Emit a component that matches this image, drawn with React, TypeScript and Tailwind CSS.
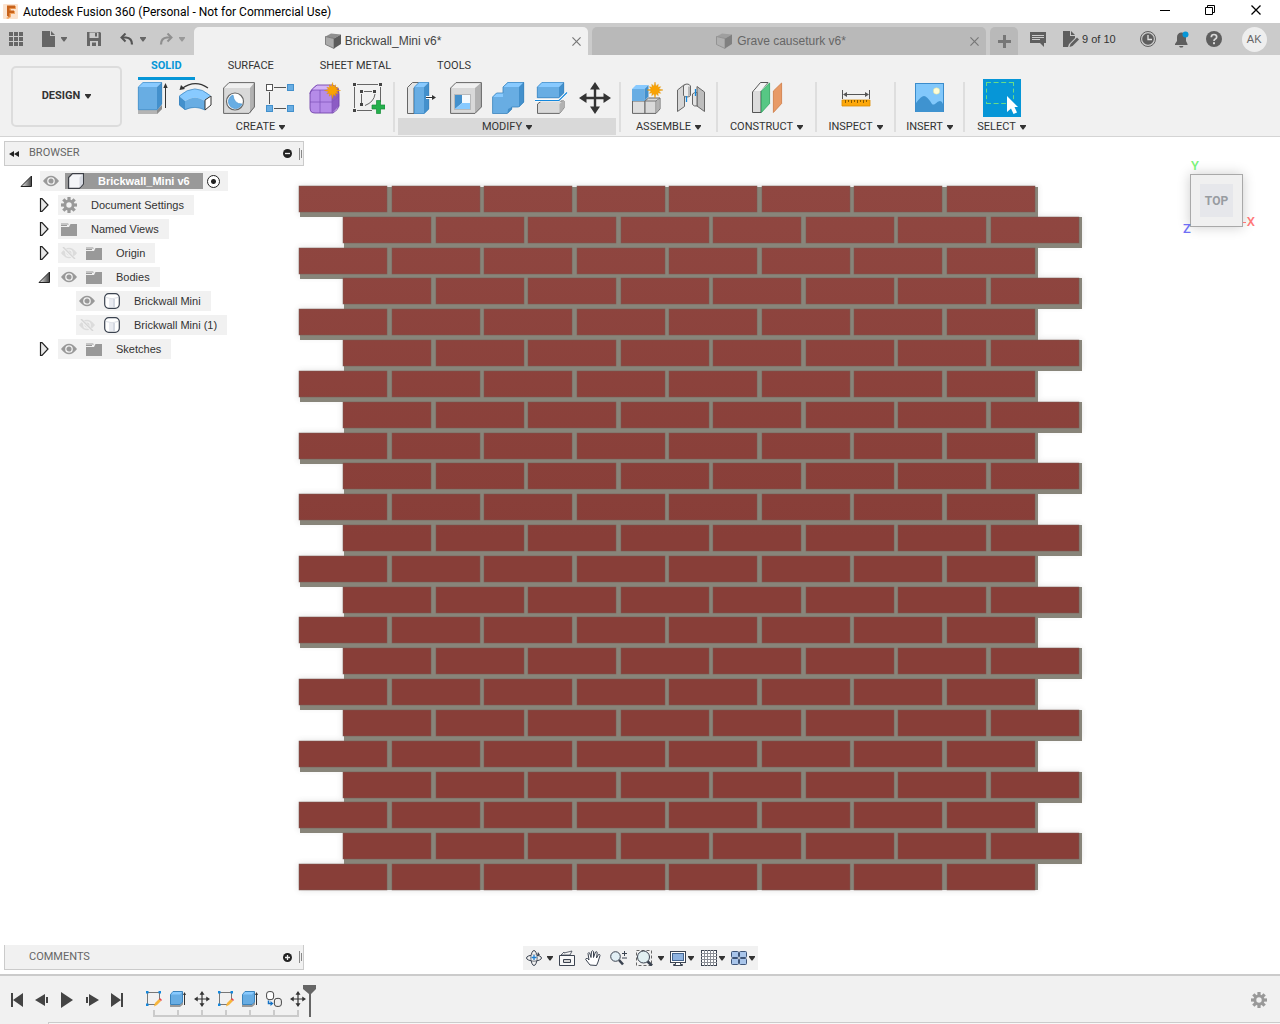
import React from "react";

type IconProps = { w: number; h: number; children: React.ReactNode; className?: string };

function Icon({ w, h, children, className = "" }: IconProps) {
  return (
    <svg width={w} height={h} viewBox={`0 0 ${w} ${h}`} className={`block shrink-0 ${className}`} aria-hidden="true">
      {children}
    </svg>
  );
}

const BLUE = "#68ade3";
const BLUE_TOP = "#88caff";
const BLUE_SIDE = "#4390cc";
const INK = "#333333";

function Caret({ className = "text-[#333]" }: { className?: string }) {
  return (
    <Icon w={6} h={5} className={className}>
      <path d="M0 0h6v1L3.500 4.500h-1L0 1z" fill="currentColor" />
    </Icon>
  );
}

function Star({ x, y }: { x: number; y: number }) {
  const points = Array.from({ length: 24 }, (_, i) => {
    const r = i % 2 ? 4 : i % 6 === 0 ? 8 : 6.6;
    const a = (i * Math.PI) / 12;
    return `${x + r * Math.sin(a)},${y - r * Math.cos(a)}`;
  }).join(" ");
  return <polygon points={points} fill="#f9a203" stroke="#e08f00" strokeWidth="0.4" />;
}

/* ---------- ribbon icons ---------- */

const ExtrudeIcon = () => (
  <Icon w={32} h={32}>
    <path d="M1 28v4h19l5-5v-4l-5 5z" fill="#b4b4b4" />
    <path d="M20 28l5-5v4l-5 5z" fill="#8d8d8d" />
    <path d="M1 5l5-5h19l-5 5z" fill={BLUE_TOP} />
    <path d="M1 5h19v23H1z" fill={BLUE} />
    <path d="M20 5l5-5v22l-5 6z" fill={BLUE_SIDE} />
    <path d="M1.3 27.5V5L6 .5h18.7v21.7L20 27.7H1.3" fill="none" stroke="#3b84bd" strokeWidth="0.6" />
    <path d="M28.5 5v21" stroke={INK} />
    <path d="M26.3 6l2.2-5 2.2 5z" fill={INK} />
  </Icon>
);

const RevolveIcon = () => (
  <Icon w={34} h={32}>
    <path d="M3 6.5Q16 -3 29 6" fill="none" stroke={INK} strokeWidth="1.2" />
    <path d="M0.5 8L2 3l4 4z" fill={INK} />
    <path d="M0 14Q16 0 32 14l-6 5Q16 12 6 19z" fill={BLUE_TOP} />
    <path d="M6 19Q16 12 26 19v9Q16 23 6 28z" fill={BLUE} />
    <path d="M0 14l6 5v9l-6-5z" fill={BLUE_SIDE} />
    <path d="M26 18l6-4v9l-6 5z" fill="#fff" stroke={INK} />
    <path d="M0.4 14Q16 0 31 13.500M0.400 14v9L6 27.600Q16 23 26 28" fill="none" stroke="#3b84bd" strokeWidth="0.7" />
  </Icon>
);

const HoleIcon = () => (
  <Icon w={32} h={32}>
    <path d="M0.500 6l5.500-5.500h25.500L27 6z" fill="#f0f0f0" />
    <path d="M27 6l4.500-5.500V25L27 31.500z" fill="#b2b2b2" />
    <path d="M0.500 6H27v25.500H0.500z" fill="#d9d9d9" />
    <path d="M0.600 6L6 0.600h25.400V25L26 31.400H0.600z" fill="none" stroke="#666" />
    <circle cx="12" cy="19.500" r="8.500" fill="#fff" stroke="#666" strokeWidth="1.200" />
    <path d="M10 13a7 7 0 1 0 9 9Q11 22 10 13z" fill={BLUE} stroke={BLUE_SIDE} strokeWidth="0.600" />
  </Icon>
);

const PatternIcon = () => (
  <Icon w={32} h={32}>
    <path d="M8 5.500h12M3.500 10v12M8 26.500h12" stroke="#555" />
    <rect x="0.500" y="2.500" width="6" height="6" fill="#fff" stroke="#555" />
    <rect x="21.500" y="2.500" width="6" height="6" fill={BLUE} stroke={BLUE_SIDE} />
    <rect x="0.500" y="23.500" width="6" height="6" fill={BLUE} stroke={BLUE_SIDE} />
    <rect x="21.500" y="23.500" width="6" height="6" fill={BLUE} stroke={BLUE_SIDE} />
  </Icon>
);

const FormIcon = () => (
  <Icon w={32} h={32}>
    <path d="M1 9l6-6h18l5 5v16l-6 7H5q-4 0-4-4z" fill="#b58be8" />
    <path d="M23 9l7-3v18l-7 7z" fill="#8c5cc4" />
    <path d="M3 7l5-4h18l-3 5H6z" fill="#d3b5f7" />
    <path d="M1 12q0-4 5-4h13q4 0 4 4v19M1 20h22l7-6M11 8v23" fill="none" stroke="#8457bd" strokeWidth="0.800" />
    <path d="M1 11Q2 7 8 3h15q7 2 7 9v12q-1 4-6 7H6q-5 0-5-5z" fill="none" stroke="#7546ab" strokeWidth="0.900" />
    <Star x={23.5} y={8.5} />
  </Icon>
);

const SketchIcon = () => (
  <Icon w={33} h={32}>
    <path d="M2.500 5v21M5 2.500h21M28.500 5v15M5 28.500h15M9.500 12v10M12 9.500h8" stroke="#666" />
    <path d="M23 12q-1 8-10 11.500" fill="none" stroke="#666" />
    <path d="M1 1h3v3H1zM27 1h3v3h-3zM1 27h3v3H1zM8 8h3v3H8zM21 8h3v3h-3zM8 21h3v3H8z" fill="#444" />
    <path d="M24.500 18.500h4v4.500h4.500v4h-4.500v4.500h-4V27H20v-4h4.500z" fill="#24b04c" stroke="#168d38" strokeWidth="0.700" />
  </Icon>
);

const PressPullIcon = () => (
  <Icon w={32} h={32}>
    <path d="M0.500 5.500L5.500 0.500H13L7 6v25.500H0.500z" fill="#e4e4e4" stroke="#666" />
    <path d="M7 5l5-5h10l-5 5z" fill={BLUE_TOP} />
    <path d="M7 5h10v27H7z" fill={BLUE} />
    <path d="M17 5l5-5v27l-5 5z" fill={BLUE_SIDE} />
    <path d="M7.300 31.700V5.200L12.200 0.400h9.500V27L17 31.700z" fill="none" stroke="#3b84bd" strokeWidth="0.700" />
    <path d="M19 15.500h7" stroke="#fff" strokeWidth="3" />
    <path d="M19 15.500h7" stroke={INK} />
    <path d="M25 13l4 2.500-4 2.500z" fill={INK} />
  </Icon>
);

const ShellIcon = () => (
  <Icon w={32} h={32}>
    <path d="M0.600 6L6 0.600h25.400L25 6z" fill="#f0f0f0" />
    <path d="M0.600 6H25v25.400H0.600z" fill="#d9d9d9" />
    <path d="M25 6l6.400-5.400V25L25 31.400z" fill="#b2b2b2" />
    <path d="M0.600 6L6 0.600h25.400V25L25 31.400H0.600z" fill="none" stroke="#666" />
    <path d="M4.500 12.500h16v15h-16z" fill="#f4f9fd" stroke="#999" strokeWidth="0.600" />
    <path d="M5 13h7v8l-7 6z" fill={BLUE_SIDE} />
    <path d="M5 27l7-6h8v6z" fill={BLUE_TOP} />
  </Icon>
);

const CombineIcon = () => (
  <Icon w={33} h={32}>
    <path d="M0.500 15l4-4H11V5l5-5h16v20l-5 5h-7v2l-4.500 4.500h-15z" fill={BLUE} />
    <path d="M11 5l5-5h16l-5 5zM0.500 15l4-4H11v4z" fill={BLUE_TOP} />
    <path d="M27 5l5-5v20l-5 5zM16 27l4-2v2l-4.500 4.500z" fill={BLUE_SIDE} />
    <path d="M0.600 15l4-4H11V5l5-4.600h15.700V20l-5 5h-7v2l-4.500 4.500H0.600z" fill="none" stroke="#3b84bd" strokeWidth="0.800" />
  </Icon>
);

const SplitIcon = () => (
  <Icon w={33} h={32}>
    <path d="M2.500 22l4-3H29v7l-4.500 5.400h-22z" fill="#d9d9d9" stroke="#666" />
    <path d="M24.500 22l4.500-4v8l-4.500 5.400z" fill="#b2b2b2" />
    <path d="M2 5l5-5h22l-5 5z" fill={BLUE_TOP} />
    <path d="M2 5h22v11H2z" fill={BLUE} />
    <path d="M24 5l5-5v11l-5 5z" fill={BLUE_SIDE} />
    <path d="M2.300 15.700V5.200L7 0.400h21.700V11L24 15.700z" fill="none" stroke="#3b84bd" strokeWidth="0.700" />
    <path d="M0 18.500h24l8-8" fill="none" stroke="#fff" strokeWidth="2.600" />
    <path d="M0 18.500h24l8-8" fill="none" stroke="#1488dd" strokeWidth="1.200" />
  </Icon>
);

const MoveIcon = ({ size = 32 }: { size?: number }) => (
  <svg width={size} height={size} viewBox="0 0 32 32" className="block shrink-0" aria-hidden="true">
    <path d="M16 5v22M5 16h22" stroke={INK} strokeWidth="2.400" />
    <path d="M16 0l5 7.500H11zM16 32l5-7.500H11zM0 16l7.500-5v10zM32 16l-7.500-5v10z" fill={INK} />
  </svg>
);

const ComponentIcon = () => (
  <Icon w={32} h={32}>
    <path d="M1.500 19H14v12.400H1.500z" fill="#dedede" stroke="#666" />
    <path d="M14 19l3.500-3H29v11l-4 4.400H14z" fill="#d9d9d9" stroke="#666" />
    <path d="M14 19h11v12M25 19l4-3" fill="none" stroke="#777" />
    <path d="M25.500 19.500L28.500 17v10l-3 3.500z" fill="#b2b2b2" />
    <path d="M1 7L5 3h12.500l-4 4z" fill={BLUE_TOP} />
    <path d="M1 7h12.500v12H1z" fill={BLUE} />
    <path d="M13.500 7l4-4v11.500l-4 4.500z" fill={BLUE_SIDE} />
    <Star x={24} y={8} />
  </Icon>
);

const JointIcon = () => (
  <Icon w={32} h={32}>
    <path d="M3.500 8l7-5.500v22l-7 5z" fill="#d6d6d6" stroke="#666" />
    <path d="M9.500 4q1-2 3.500-2t3.500 2v9.500q-1 1.500-3.500 1.500t-3.500-1.500z" fill="#ededed" stroke="#666" />
    <path d="M14 4.500h2v9l-2 1z" fill="#b9b9b9" />
    <path d="M23 4.500l7.500 5.500v19.500L23 24z" fill="#bdbdbd" stroke="#666" />
    <path d="M18.500 12q2-2 4.500-1.500V24q-3 .500-4.500-1.500z" fill="#e3e3e3" stroke="#666" />
    <path d="M12.500 14v6M21.500 7v7" stroke="#1488dd" strokeWidth="1.300" />
  </Icon>
);

const PlaneIcon = () => (
  <Icon w={32} h={32}>
    <path d="M1.500 10l8-9.500H17L10 8v22.500H1.500z" fill="#dcdcdc" stroke="#555" />
    <path d="M3 9l7-8h6l-6 8z" fill="#f4f4f4" />
    <path d="M10.400 9L18.600 1v20.500l-8.200 9z" fill="#57c784" stroke="#2da35d" strokeWidth="0.800" />
    <path d="M22.400 9L30.600 1v20.500l-8.200 9z" fill="#e89a66" stroke="#ce7a42" strokeWidth="0.800" />
  </Icon>
);

const MeasureIcon = () => (
  <Icon w={32} h={32}>
    <path d="M2.500 8v9M29.500 8v9M5 12.500h22" stroke="#555" />
    <path d="M3 12.500l4-2.500v5zM29 12.500L25 10v5z" fill="#555" />
    <path d="M2 18h28v6H2z" fill="#fda80b" stroke="#dc8e00" strokeWidth="0.800" />
    <path d="M5.500 18v3M8.500 18v2M11.500 18v3M14.500 18v2M17.500 18v3M20.500 18v2M23.500 18v3M26.500 18v2" stroke="#8a5b00" />
  </Icon>
);

const InsertIcon = () => (
  <Icon w={32} h={32}>
    <rect x="1.500" y="1.500" width="28" height="28" fill="#82c8fb" stroke="#3b8ccb" />
    <circle cx="22.500" cy="9" r="3.200" fill="#fffdd6" stroke="#d8dc9f" strokeWidth="0.500" />
    <path d="M2 21q5-7 8-7 3 0 8 8 1 1 3 0 3-3 5-3 2 0 3 3v8H2z" fill="#3f93d0" />
  </Icon>
);

const SelectIcon = () => (
  <Icon w={38} h={38}>
    <rect width="38" height="38" fill="#0696d7" />
    <path d="M3 3.500h28M3 24.500h20" fill="none" stroke="#68dc86" strokeDasharray="5 2.600" />
    <path d="M3.500 3v22M30.500 3v18" fill="none" stroke="#68dc86" strokeDasharray="4 2.600" />
    <path d="M24 17v16l4-3.500 2.500 5.500 3.500-1.500-2.500-5.500H35z" fill="#fff" />
  </Icon>
);

/* ---------- tab bar icons ---------- */

const CubeTabIcon = ({ faded = false }: { faded?: boolean }) => (
  <Icon w={16} h={16} className={faded ? "opacity-60" : ""}>
    <path d="M0.500 3.500L6 0.500l10 1-7 4z" fill="#8f8f8f" />
    <path d="M0.500 3.500L9 5.500v10l-8.500-4z" fill="#ababab" stroke="#6d6d6d" strokeWidth="0.800" />
    <path d="M9 5.500l7-4v9.500l-7 4.500z" fill="#5b5b5b" />
  </Icon>
);

const GridIcon = () => (
  <Icon w={14} h={14}>
    {[0, 5, 10].map((y) => [0, 5, 10].map((x) => <rect key={`${x}-${y}`} x={x} y={y} width="4" height="4" fill="#666" />))}
  </Icon>
);

const FileIcon = () => (
  <Icon w={13} h={16}>
    <path d="M0 0h8v5h5v11H0zM9 0l4 4H9z" fill="#666" />
  </Icon>
);

const SaveIcon = () => (
  <Icon w={14} h={14}>
    <path d="M0 0h13l1 1v13H0z" fill="#666" />
    <path d="M2.500 0.500h9V6h-9zM3 9h8v5H3z" fill="#cbcbcb" />
    <path d="M8 1h2v3.500H8zM5 10.500h4V14H5z" fill="#666" />
  </Icon>
);

const UndoIcon = ({ flip = false }: { flip?: boolean }) => (
  <Icon w={14} h={12} className={flip ? "-scale-x-100 opacity-50" : ""}>
    <path d="M5.500 0.500L1.500 4.500l4 4" fill="none" stroke="#555" strokeWidth="2" />
    <path d="M2 4.500h4q6 0.500 6 7" fill="none" stroke="#555" strokeWidth="2.200" />
  </Icon>
);

const CommentIcon = () => (
  <Icon w={16} h={15}>
    <path d="M0 0h16v11h-2v4l-4-4H0z" fill="#5e5e5e" />
    <path d="M2 3.500h12M2 5.500h12M2 7.500h8" stroke="#cbcbcb" />
  </Icon>
);

const EditDocIcon = () => (
  <Icon w={17} h={16}>
    <path d="M0 0h7v5h5v2l-6 6-1 3H0z" fill="#5e5e5e" />
    <path d="M8 0l4 4H8z" fill="#5e5e5e" />
    <path d="M7.500 13L14 6.500l2 2L9.500 15 6.500 16z" fill="#5e5e5e" />
  </Icon>
);

const ClockIcon = () => (
  <Icon w={16} h={16}>
    <circle cx="8" cy="8" r="7.500" fill="none" stroke="#5e5e5e" />
    <circle cx="8" cy="8" r="5.800" fill="#5e5e5e" />
    <path d="M8 4v4.500h4" fill="none" stroke="#e2e2e2" strokeWidth="1.300" />
  </Icon>
);

const BellIcon = () => (
  <Icon w={16} h={17}>
    <path d="M7 1.500a5 5 0 0 0-4 5V10L1 13v1h12.500v-1L12 10V6.500a5 5 0 0 0-4-5z" fill="#5e5e5e" />
    <path d="M5 15h4.500l-1 1.500H6z" fill="#5e5e5e" />
    <circle cx="11.500" cy="3.500" r="3" fill="#0696d7" />
  </Icon>
);

const HelpIcon = () => (
  <Icon w={16} h={16}>
    <circle cx="8" cy="8" r="8" fill="#5e5e5e" />
    <path d="M5.300 6.300Q5.300 3.500 8 3.500t2.700 2.400Q10.700 7.300 9 8.200 8 8.800 8 9.900" fill="none" stroke="#d8d8d8" strokeWidth="1.700" />
    <rect x="7" y="11.200" width="2" height="2" fill="#d8d8d8" />
  </Icon>
);

const CrossIcon = ({ size = 9, className = "" }: { size?: number; className?: string }) => (
  <svg width={size} height={size} viewBox="0 0 10 10" className={`block ${className}`} aria-hidden="true">
    <path d="M0.500 0.500l9 9M9.500 0.500l-9 9" stroke="currentColor" strokeWidth="1.300" />
  </svg>
);

/* ---------- browser icons ---------- */

const OpenArrow = () => (
  <Icon w={13} h={12}>
    <defs>
      <linearGradient id="open-arrow" x1="0" x2="1">
        <stop offset="0" stopColor="#eee" />
        <stop offset="1" stopColor="#444" />
      </linearGradient>
    </defs>
    <path d="M1 11.500L11.500 1v10.500z" fill="url(#open-arrow)" stroke="#222" />
  </Icon>
);

const ClosedArrow = () => (
  <Icon w={13} h={14}>
    <path d="M2.500 0.700H4l6 6.300-6 6.300H2.500z" fill="#e8e8e8" stroke="#222" strokeWidth="1.200" />
  </Icon>
);

const EyeIcon = ({ off = false }: { off?: boolean }) => (
  <Icon w={16} h={12}>
    <path d="M0 6Q8-4.500 16 6 8 16.500 0 6z" fill={off ? "#dcdcdc" : "#999"} />
    <circle cx="8" cy="6" r="3.200" fill={off ? "#dcdcdc" : "#999"} stroke="#f1f1f1" strokeWidth="1.300" />
    {off && (
      <>
        <path d="M1 -0.500l13 13" stroke="#f1f1f1" strokeWidth="3" />
        <path d="M2 0l12 12" stroke="#d6d6d6" strokeWidth="1.400" />
      </>
    )}
  </Icon>
);

const FolderIcon = () => (
  <Icon w={16} h={13}>
    <path d="M0 4h8l1.500-3H16v12H0z" fill="#999" />
    <path d="M0 0.500h7l1 1H0zM0 2h6v1H0z" fill="#999" />
  </Icon>
);

const GearIcon = () => (
  <Icon w={16} h={16}>
    {[0, 45, 90, 135].map((a) => (
      <rect key={a} x="6.400" y="0" width="3.200" height="16" fill="#999" transform={`rotate(${a} 8 8)`} />
    ))}
    <circle cx="8" cy="8" r="5.500" fill="#999" />
    <circle cx="8" cy="8" r="2.700" fill="#f1f1f1" />
  </Icon>
);

const BodyIcon = () => (
  <Icon w={16} h={16}>
    <rect x="0.700" y="0.700" width="14.600" height="14.600" rx="4" fill="#fff" stroke="#3b4350" strokeWidth="1.200" />
    <path d="M5 6h6v8H5z" fill="#e9ebf1" />
    <path d="M9 6h2v8H9z" fill="#d5d9e2" />
    <path d="M2 4.500Q8 7 14 4.500" fill="none" stroke="#dde0e7" />
  </Icon>
);

const RootCubeIcon = () => (
  <Icon w={16} h={16}>
    <path d="M0.600 4.500L4.500 0.600h10.900V11l-4 4.400H0.600z" fill="#f4f5f8" stroke="#3c3f46" strokeWidth="1.200" />
    <path d="M11.500 4.500l3.300-3.300V11l-3.300 3.700z" fill="#d7dae2" />
  </Icon>
);

/* ---------- application ---------- */

function TitleBar() {
  return (
    <header className="flex h-[23px] items-center bg-white pl-[3px] font-['Roboto','Noto_Sans',sans-serif] text-[12px] text-black">
      <Icon w={15} h={15}>
        <rect width="15" height="15" rx="1" fill="#fbe3cf" />
        <path d="M3 14l2-1V2h8v3H8v2h4v3H8v3l-3 2z" fill="#f2a562" />
        <path d="M4 1.500h8v2.700H6.500v2.300H11V9H6.500v4L4 12z" fill="#c8621a" />
      </Icon>
      <h1 className="ml-[5px] text-[12px] leading-none whitespace-nowrap">Autodesk Fusion 360 (Personal - Not for Commercial Use)</h1>
      <div className="ml-auto flex h-full items-center pb-[3px]">
        <button aria-label="Minimize" className="flex h-full w-[45px] items-center justify-center">
          <Icon w={10} h={10}><path d="M0 5.500h10" stroke="#000" /></Icon>
        </button>
        <button aria-label="Restore" className="flex h-full w-[45px] items-center justify-center">
          <Icon w={10} h={10}><path d="M0.500 2.500h7v7h-7zM2.500 2V0.500h7v7H8" fill="none" stroke="#000" /></Icon>
        </button>
        <button aria-label="Close" className="flex h-full w-12 items-center justify-center">
          <CrossIcon size={10} className="text-black" />
        </button>
      </div>
    </header>
  );
}

function TabBar() {
  return (
    <div className="flex h-8 items-end bg-[#cbcbcb] text-[12px]">
      <div className="flex h-full w-[194px] shrink-0 items-center pl-[9px]">
        <button aria-label="Show data panel"><GridIcon /></button>
        <button aria-label="File" className="ml-[19px] flex items-center gap-[6px]"><FileIcon /><Caret className="text-[#666]" /></button>
        <button aria-label="Save" className="ml-5"><SaveIcon /></button>
        <button aria-label="Undo" className="ml-[19px] flex items-center gap-[6px]"><UndoIcon /><Caret className="text-[#666]" /></button>
        <button aria-label="Redo" className="ml-[13px] flex items-center gap-[6px]"><UndoIcon flip /><Caret className="text-[#999]" /></button>
      </div>
      <div className="flex h-7 flex-1 items-center rounded-t-[5px] bg-[#f1f1f1] pr-[7px] text-[#444]">
        <button className="flex flex-1 items-center justify-center gap-1"><CubeTabIcon />Brickwall_Mini v6*</button>
        <button aria-label="Close Brickwall_Mini" className="text-[#777]"><CrossIcon /></button>
      </div>
      <div className="ml-1 flex h-7 flex-1 items-center rounded-t-[5px] bg-[#b9b9b9] pr-[7px] text-[#666]">
        <button className="flex flex-1 items-center justify-center gap-[5px]"><CubeTabIcon faded />Grave causeturk v6*</button>
        <button aria-label="Close Grave causeturk" className="text-[#777]"><CrossIcon /></button>
      </div>
      <button aria-label="New design" className="ml-1 flex h-7 w-7 items-center justify-center rounded-t-[5px] bg-[#b9b9b9]">
        <Icon w={13} h={13}><path d="M6.500 0v13M0 6.500h13" stroke="#777" strokeWidth="3" /></Icon>
      </button>
      <div className="flex h-full w-[262px] shrink-0 items-center pl-3 text-[11px] text-[#333]">
        <button aria-label="Comments"><CommentIcon /></button>
        <button className="ml-[17px] flex items-center gap-[2px] whitespace-nowrap"><EditDocIcon />9 of 10</button>
        <button aria-label="Job status" className="ml-6"><ClockIcon /></button>
        <button aria-label="Notifications" className="ml-[18px]"><BellIcon /></button>
        <button aria-label="Help" className="ml-4"><HelpIcon /></button>
        <button className="ml-5 h-[25px] w-[25px] rounded-full bg-[#eee] text-center text-[11px] text-[#666]">AK</button>
      </div>
    </div>
  );
}

type Tool = { name: string; icon: React.ReactNode };
type Group = { label: string; width: string; tools: Tool[]; active?: boolean };

const groups: Group[] = [
  {
    label: "CREATE",
    width: "w-[256px] pr-[9px]",
    tools: [
      { name: "Extrude", icon: <ExtrudeIcon /> },
      { name: "Revolve", icon: <RevolveIcon /> },
      { name: "Hole", icon: <HoleIcon /> },
      { name: "Rectangular pattern", icon: <PatternIcon /> },
      { name: "Create form", icon: <FormIcon /> },
      { name: "Create sketch", icon: <SketchIcon /> },
    ],
  },
  {
    label: "MODIFY",
    active: true,
    width: "w-[224px] px-[3px]",
    tools: [
      { name: "Press pull", icon: <PressPullIcon /> },
      { name: "Shell", icon: <ShellIcon /> },
      { name: "Combine", icon: <CombineIcon /> },
      { name: "Split body", icon: <SplitIcon /> },
      { name: "Move", icon: <MoveIcon /> },
    ],
  },
  {
    label: "ASSEMBLE",
    width: "w-[95px]",
    tools: [
      { name: "New component", icon: <ComponentIcon /> },
      { name: "Joint", icon: <JointIcon /> },
    ],
  },
  { label: "CONSTRUCT", width: "w-[97px]", tools: [{ name: "Offset plane", icon: <PlaneIcon /> }] },
  { label: "INSPECT", width: "w-[77px]", tools: [{ name: "Measure", icon: <MeasureIcon /> }] },
  { label: "INSERT", width: "w-[67px]", tools: [{ name: "Insert image", icon: <InsertIcon /> }] },
  { label: "SELECT", width: "w-[73px]", tools: [{ name: "Select", icon: <SelectIcon /> }] },
];

function Ribbon() {
  return (
    <section className="flex border-b border-[#d4d4d4] bg-[#f1f1f1] font-['Roboto',sans-serif] text-[11px] text-[#333]">
      <button className="mt-[11px] ml-[11px] flex h-[61px] w-[111px] shrink-0 items-center justify-center gap-[5px] rounded-[5px] border-2 border-[#dcdcdc] font-bold">
        DESIGN <Caret />
      </button>
      <div className="ml-[15px] min-w-0">
        <nav className="ml-px flex h-[25px] gap-5">
          {["SOLID", "SURFACE", "SHEET METAL", "TOOLS"].map((t, i) => (
            <button
              key={t}
              className={`border-b-[3px] px-[13px] pt-px whitespace-nowrap ${i === 0 ? "border-[#0696d7] font-bold text-[#0696d7]" : "border-transparent"}`}
            >
              {t}
            </button>
          ))}
        </nav>
        <div className="mt-[2px] flex">
          {groups.map((g, i) => (
            <React.Fragment key={g.label}>
              {i > 0 && <div className="h-[50px] w-[2px] shrink-0 bg-[#dedede]" />}
              <div className={`flex shrink-0 flex-col ${g.width}`}>
                <div className={`flex h-9 items-start justify-center gap-[11px] ${g.active ? "pl-[3px]" : ""}`}>
                  {g.tools.map((t) => (
                    <button key={t.name} aria-label={t.name} title={t.name} className={`flex w-8 justify-center ${g.label === "SELECT" ? "-mt-[3px]" : ""}`}>
                      {t.icon}
                    </button>
                  ))}
                </div>
                <button className={`mb-px flex h-[17px] items-center justify-center gap-1 pt-px ${g.active ? "bg-[#d9d9d9]" : ""}`}>
                  {g.label} <Caret />
                </button>
              </div>
            </React.Fragment>
          ))}
        </div>
      </div>
    </section>
  );
}

type Node = { label: string; depth: string; open?: boolean; leaf?: boolean; eye?: "on" | "off"; kind: "gear" | "folder" | "body" };

const nodes: Node[] = [
  { label: "Document Settings", depth: "pl-[38px]", kind: "gear" },
  { label: "Named Views", depth: "pl-[38px]", kind: "folder" },
  { label: "Origin", depth: "pl-[38px]", kind: "folder", eye: "off" },
  { label: "Bodies", depth: "pl-[38px]", kind: "folder", eye: "on", open: true },
  { label: "Brickwall Mini", depth: "pl-[56px]", kind: "body", eye: "on", leaf: true },
  { label: "Brickwall Mini (1)", depth: "pl-[56px]", kind: "body", eye: "off", leaf: true },
  { label: "Sketches", depth: "pl-[38px]", kind: "folder", eye: "on" },
];

function PanelHeader({ title, open }: { title: string; open: boolean }) {
  return (
    <div className={`flex h-[25px] w-[300px] items-center border-[#cbcbcb] bg-[#f1f1f1] font-['Roboto',sans-serif] text-[11px] text-[#666] ${open ? "border" : "border-x border-b"}`}>
      <div className="w-6 pl-1">
        {open && (
          <button aria-label="Collapse browser" className="block">
            <Icon w={10} h={6}><path d="M5 0v6L0 3zM10 0v6L5 3z" fill="#222" /></Icon>
          </button>
        )}
      </div>
      <h2>{title}</h2>
      <button aria-label={open ? "Hide" : "Show"} className="ml-auto">
        <Icon w={9} h={9}>
          <circle cx="4.500" cy="4.500" r="4.500" fill="#222" />
          <path d={open ? "M2 4.500h5" : "M2 4.500h5M4.500 2v5"} stroke="#f1f1f1" strokeWidth="1.300" />
        </Icon>
      </button>
      <Icon w={3} h={12} className="mr-px ml-[7px]"><path d="M0.500 0v12M2.500 2v8" stroke="#888" /></Icon>
    </div>
  );
}

function Browser() {
  return (
    <aside className="relative w-[300px] text-[11px] text-[#333]">
      <PanelHeader title="BROWSER" open />
      <ul className="mt-[3px]">
        <li className="flex h-6 items-center pl-4">
          <button aria-label="Collapse" className="w-5"><OpenArrow /></button>
          <div className="flex h-5 items-center bg-[#f1f1f1] pr-2 pl-[3px]">
            <button aria-label="Toggle visibility"><EyeIcon /></button>
            <button className="ml-[6px] flex h-4 items-center gap-[14px] bg-[#999] pr-[13px] pl-[3px] font-bold whitespace-nowrap text-white"><RootCubeIcon />Brickwall_Mini v6</button>
            <input
              type="radio"
              defaultChecked
              aria-label="Activate component"
              className="ml-1 h-[13px] w-[13px] appearance-none rounded-full border border-[#222] bg-[radial-gradient(circle,#222_0_2px,#fff_3px)]"
            />
          </div>
        </li>
        {nodes.map((n) => (
          <li key={n.label} className={`flex h-6 items-center ${n.depth}`}>
            {!n.leaf ? (
              <button aria-label="Expand or collapse" className="-ml-1 w-5 shrink-0">{n.open ? <OpenArrow /> : <ClosedArrow />}</button>
            ) : (
              <span className="-ml-1 w-5" />
            )}
            <div className="flex h-5 items-center bg-[#f1f1f1] pr-[10px] pl-[3px]">
              {n.eye && <button aria-label="Toggle visibility" className="mr-[9px]"><EyeIcon off={n.eye === "off"} /></button>}
              <button className="flex items-center gap-[14px] whitespace-nowrap">
                {n.kind === "gear" ? <GearIcon /> : n.kind === "folder" ? <FolderIcon /> : <BodyIcon />}
                {n.label}
              </button>
            </div>
          </li>
        ))}
      </ul>
    </aside>
  );
}

const ROWS = 23;
const PITCH_X = 92.5;
const PITCH_Y = 30.82;

function BrickWall() {
  const rows = Array.from({ length: ROWS }, (_, r) => ({
    x: r % 2 ? 343 : 299,
    y: Math.round(49 + r * PITCH_Y),
    first: r === 0,
    last: r === ROWS - 1,
  }));
  return (
    <svg viewBox="0 0 1280 837" className="absolute inset-0 h-full w-full" role="img" aria-label="Brick wall model, top view">
      <defs>
        <linearGradient id="brick" gradientUnits="userSpaceOnUse" x1="0" y1="49" x2="0" y2="400">
          <stop offset="0" stopColor="#904741" />
          <stop offset="1" stopColor="#883e38" />
        </linearGradient>
        <filter id="soft" x="-5%" y="-5%" width="110%" height="110%">
          <feGaussianBlur stdDeviation="3" />
        </filter>
      </defs>
      <g filter="url(#soft)" opacity="0.22">
        {rows.map((r) => <rect key={r.y} x={r.x} y={r.y} width="738" height={r.last ? 26 : 28} fill="#555" />)}
      </g>
      {rows.map((r) => (
        <rect key={r.y} x={r.x + 1} y={r.first ? r.y + 1 : r.y} width="738" height={r.last ? 26 : r.first ? 30 : 31} fill="#88857a" shapeRendering="crispEdges" />
      ))}
      {rows.map((r) =>
        Array.from({ length: 8 }, (_, c) => (
          <rect key={`${r.y}-${c}`} x={Math.round(r.x + c * PITCH_X)} y={r.y} width="88" height="26" fill="url(#brick)" stroke="#7a5a50" strokeWidth="0.500" />
        )),
      )}
    </svg>
  );
}

function ViewCube() {
  return (
    <div className="relative mt-[33px] mr-[37px] h-[53px] w-[53px] border border-[#a9a9a9] bg-[#f0f0f0] p-[9px] font-['Roboto',sans-serif] shadow-[0_0_12px_rgba(0,0,0,0.2)]">
      <button className="flex h-full w-full items-center justify-center bg-[#e6e7eb] text-[12px] font-bold text-[#989ca1]">TOP</button>
      <span className="absolute -top-[18px] left-0 text-[13px] leading-[18px] font-medium text-[#79f279]">Y</span>
      <span className="absolute -bottom-3 -left-2 text-[13px] leading-[18px] font-medium text-[#6f6ff5]">Z</span>
      <span className="absolute -right-[13px] -bottom-[5px] text-[13px] leading-[18px] font-medium text-[#f77]">X</span>
      <span className="absolute -right-1 bottom-[3px] h-px w-[3px] bg-[#f77]" />
    </div>
  );
}

const S = "#3b4350";

function NavBar() {
  return (
    <div className="flex h-6 items-center bg-[#f1f1f1] pr-[3px] pl-[3px]">
      <button aria-label="Orbit" className="flex items-center gap-[5px]">
        <Icon w={16} h={16}>
          <ellipse cx="8" cy="8" rx="7.500" ry="3" fill="none" stroke={S} />
          <ellipse cx="8" cy="8" rx="3" ry="7.500" fill="none" stroke={S} />
          <path d="M5.500 4.500h5v6h-5z" fill="#f1f1f1" />
          <path d="M5.500 7.500h5M8 5v5" stroke="#1d7fd1" strokeWidth="1.300" />
          <path d="M12 2l2 3-3 1z" fill={S} />
        </Icon>
        <Caret />
      </button>
      <button aria-label="Look at" className="ml-[6px]">
        <Icon w={16} h={16}>
          <path d="M2 5l3-3v1l8-2-2 4z" fill="#f7f7f7" stroke={S} strokeWidth="0.800" />
          <path d="M0.500 5.500h15v10h-15z" fill="#f7f7f7" stroke={S} />
          <path d="M4.500 9.500h7v3h-7z" fill="#d5d5d5" stroke={S} />
        </Icon>
      </button>
      <button aria-label="Pan" className="ml-[10px]">
        <Icon w={16} h={16}>
          <path d="M5 15L0.700 9.500Q0.700 8 2.500 8.500L4 10 3 3.500Q3.500 2 4.700 3L6 7.500 6.500 1.500Q7.500 0 8.500 1.500v6L10.500 2Q12 1 12.200 2.800L11.500 8 13.500 4.500Q15 4 15 5.500L13 12l-1.500 3.500z" fill="#fff" stroke={S} />
        </Icon>
      </button>
      <button aria-label="Zoom" className="ml-[9px]">
        <Icon w={17} h={16}>
          <path d="M9 10l4 4.500" stroke={S} strokeWidth="2.600" />
          <circle cx="5.500" cy="6.500" r="4.800" fill="#e2eff5" stroke={S} />
          <path d="M12 3.500h5M14.500 1v5M12 8h5" stroke={S} />
        </Icon>
      </button>
      <button aria-label="Fit" className="ml-[9px] flex items-center gap-[5px]">
        <Icon w={17} h={16}>
          <rect x="0.500" y="0.500" width="15" height="15" fill="none" stroke="#666" strokeDasharray="3 2" />
          <path d="M11 11l5 4.500" stroke={S} strokeWidth="2.800" />
          <circle cx="7.500" cy="7" r="6" fill="#e2f0f2" stroke={S} />
        </Icon>
        <Caret />
      </button>
      <button aria-label="Display settings" className="ml-[6px] flex items-center gap-[2px]">
        <Icon w={16} h={16}>
          <rect x="0.500" y="1.500" width="15" height="11" fill="#fff" stroke={S} />
          <rect x="2.500" y="3.500" width="11" height="7" fill="#8fb3e0" stroke="#43648f" />
          <path d="M5.500 13v1.500h-2v1h9v-1h-2V13" fill="#fff" stroke={S} />
        </Icon>
        <Caret />
      </button>
      <button aria-label="Grid and snaps" className="ml-[7px] flex items-center gap-[2px]">
        <Icon w={16} h={16}>
          <rect x="0.500" y="0.500" width="15" height="15" fill="#fff" stroke={S} />
          <path d="M3.500 0v16M6.500 0v16M9.500 0v16M12.500 0v16M0 3.500h16M0 6.500h16M0 9.500h16M0 12.500h16" stroke="#8b8f96" />
        </Icon>
        <Caret />
      </button>
      <button aria-label="Viewports" className="ml-[6px] flex items-center gap-[2px]">
        <Icon w={16} h={14}>
          {[[0.5, 0.5], [8.5, 0.5], [0.5, 7.5], [8.5, 7.5]].map(([x, y]) => (
            <rect key={`${x}-${y}`} x={x} y={y} width="7" height="6" rx="1" fill="#a9c5ea" stroke="#3e5578" />
          ))}
        </Icon>
        <Caret />
      </button>
    </div>
  );
}

const MiniSketch = () => (
  <Icon w={16} h={16}>
    <path d="M2 1.500h11M1.500 2v11M13.500 2v7M2 13.500h7" stroke="#777" />
    <path d="M0 0h2.500v2.500H0zM12.500 0H15v2.500h-2.500zM0 12.500h2.500V15H0z" fill="#1488dd" />
    <path d="M8 15.500l1-3.500 4-4 2 2-4 4z" fill="#f7b63c" />
    <path d="M13 8l1-1 2 2-1 1z" fill="#e8414b" />
  </Icon>
);

const MiniExtrude = () => (
  <Icon w={16} h={16}>
    <path d="M0 13.500h10l3-3v3l-3 2.500H0z" fill="#999" />
    <path d="M0.500 3.500L3 0.500h9.500V11L10 13.500H0.500z" fill={BLUE} stroke="#3b84bd" />
    <path d="M1 3.500L3 1h9l-2 2.500z" fill={BLUE_TOP} />
    <path d="M14.500 3v11" stroke={INK} />
    <path d="M13 4l1.500-3L16 4z" fill={INK} />
  </Icon>
);

const MiniCopy = () => (
  <Icon w={16} h={16}>
    <rect x="0.600" y="0.600" width="7" height="8" rx="2.500" fill="#fff" stroke="#444" />
    <rect x="8.400" y="7.400" width="7" height="8" rx="2.500" fill="#eee" stroke="#444" />
    <path d="M2.500 9.500v3H5" fill="none" stroke="#1270c4" strokeWidth="1.500" />
    <path d="M4.500 10l3 2.500-3 2.500z" fill="#1270c4" />
  </Icon>
);

const playback = [
  { name: "Go to start", d: "M1 1h2v14H1zM13 1v14L3 8z" },
  { name: "Step back", d: "M10 2v12L0 8zM11 5h2v6h-2z" },
  { name: "Play", d: "M1 0l12 8-12 8z" },
  { name: "Step forward", d: "M4 2v12l10-6zM1 5h2v6H1z" },
  { name: "Go to end", d: "M1 1v14l10-7zM11 1h2v14h-2z" },
];

function Timeline() {
  const features = [
    <MiniSketch />, <MiniExtrude />, <MoveIcon size={16} />, <MiniSketch />, <MiniExtrude />, <MiniCopy />, <MoveIcon size={16} />,
  ];
  return (
    <footer className="flex h-[50px] flex-col border-t-2 border-[#cbcbcb] bg-[#f1f1f1]">
      <div className="flex flex-1 items-start pl-[10px]">
        <div className="mt-4 flex gap-[11px]">
          {playback.map((p) => (
            <button key={p.name} aria-label={p.name}>
              <Icon w={14} h={16}><path d={p.d} fill="#444" /></Icon>
            </button>
          ))}
        </div>
        <div className="mt-[15px] ml-[22px]">
          <div className="flex gap-2">
            {features.map((f, i) => (
              <button key={i} aria-label={`Feature ${i + 1}`} className="flex flex-col items-center">
                {f}
                <span className="mt-[3px] h-[5px] w-[2px] bg-[#cbcbcb]" />
              </button>
            ))}
          </div>
          <div className="mx-[7px] h-[2px] bg-[#cbcbcb]" />
        </div>
        <Icon w={13} h={32} className="mt-[9px] -ml-[3px]">
          <path d="M0 0h13v4L8 9v23H6V9L0 4z" fill="#666" />
        </Icon>
        <button aria-label="Timeline settings" className="mt-4 mr-[13px] ml-auto"><GearIcon /></button>
      </div>
      <div className="ml-12 h-[2px] border-t border-l border-[#cbcbcb] bg-[#f8f8f8]" />
    </footer>
  );
}

export default function App() {
  return (
    <div className="flex min-h-screen flex-col overflow-hidden bg-white font-['Liberation_Sans',Arial,sans-serif]">
      <TitleBar />
      <TabBar />
      <Ribbon />
      <main className="relative flex flex-1 flex-col justify-between bg-white">
        <BrickWall />
        <div className="flex items-start justify-between pt-1 pl-1">
          <Browser />
          <div className="relative"><ViewCube /></div>
        </div>
        <div className="relative grid grid-cols-[1fr_auto_1fr] items-end px-1 pb-1">
          <PanelHeader title="COMMENTS" open={false} />
          <NavBar />
        </div>
      </main>
      <Timeline />
    </div>
  );
}
